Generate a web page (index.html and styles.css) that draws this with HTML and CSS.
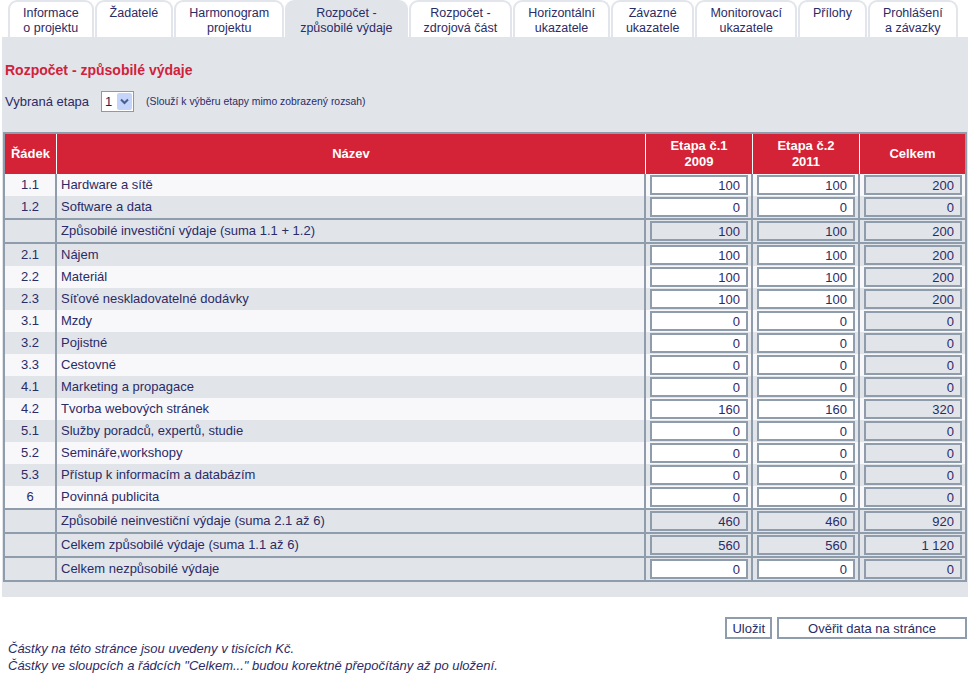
FILE: index.html
```html
<!DOCTYPE html>
<html lang="cs">
<head>
<meta charset="utf-8">
<title>Rozpočet - způsobilé výdaje</title>
<link rel="stylesheet" href="styles.css">
</head>
<body>
<div class="page">
  <nav class="tabs">
    <a class="tab">Informace<br>o projektu</a>
    <a class="tab">Žadatelé</a>
    <a class="tab">Harmonogram<br>projektu</a>
    <a class="tab active">Rozpočet -<br>způsobilé výdaje</a>
    <a class="tab">Rozpočet -<br>zdrojová část</a>
    <a class="tab">Horizontální<br>ukazatele</a>
    <a class="tab">Závazné<br>ukazatele</a>
    <a class="tab">Monitorovací<br>ukazatele</a>
    <a class="tab">Přílohy</a>
    <a class="tab">Prohlášení<br>a závazky</a>
  </nav>

  <section class="panel">
    <h1 class="title">Rozpočet - způsobilé výdaje</h1>
    <div class="etapa">
      <span class="etapa-label">Vybraná etapa</span>
      <div class="select">
        <span class="select-value">1</span>
        <span class="select-btn">
          <svg width="9" height="7" viewBox="0 0 9 7"><path d="M1 1.5 L4.5 5 L8 1.5" fill="none" stroke="#4a5f8c" stroke-width="2"/></svg>
        </span>
      </div>
      <span class="hint">(Slouží k výběru etapy mimo zobrazený rozsah)</span>
    </div>

    <table class="budget">
      <colgroup>
        <col class="c-num"><col class="c-name"><col class="c-val"><col class="c-val"><col class="c-total">
      </colgroup>
      <thead>
        <tr><th>Řádek</th><th>Název</th><th>Etapa č.1<br>2009</th><th>Etapa č.2<br>2011</th><th class="last">Celkem</th></tr>
      </thead>
      <tbody>
        <tr class="light"><td class="num">1.1</td><td class="name">Hardware a sítě</td><td class="val"><input value="100"></td><td class="val"><input value="100"></td><td class="val last"><input class="ro" value="200" readonly></td></tr>
        <tr class="gray"><td class="num">1.2</td><td class="name">Software a data</td><td class="val"><input value="0"></td><td class="val"><input value="0"></td><td class="val last"><input class="ro" value="0" readonly></td></tr>
        <tr class="gray sep"><td class="num"></td><td class="name">Způsobilé investiční výdaje (suma 1.1 + 1.2)</td><td class="val"><input class="ro" value="100" readonly></td><td class="val"><input class="ro" value="100" readonly></td><td class="val last"><input class="ro" value="200" readonly></td></tr>
        <tr class="gray sep"><td class="num">2.1</td><td class="name">Nájem</td><td class="val"><input value="100"></td><td class="val"><input value="100"></td><td class="val last"><input class="ro" value="200" readonly></td></tr>
        <tr class="light"><td class="num">2.2</td><td class="name">Materiál</td><td class="val"><input value="100"></td><td class="val"><input value="100"></td><td class="val last"><input class="ro" value="200" readonly></td></tr>
        <tr class="gray"><td class="num">2.3</td><td class="name">Síťové neskladovatelné dodávky</td><td class="val"><input value="100"></td><td class="val"><input value="100"></td><td class="val last"><input class="ro" value="200" readonly></td></tr>
        <tr class="light"><td class="num">3.1</td><td class="name">Mzdy</td><td class="val"><input value="0"></td><td class="val"><input value="0"></td><td class="val last"><input class="ro" value="0" readonly></td></tr>
        <tr class="gray"><td class="num">3.2</td><td class="name">Pojistné</td><td class="val"><input value="0"></td><td class="val"><input value="0"></td><td class="val last"><input class="ro" value="0" readonly></td></tr>
        <tr class="light"><td class="num">3.3</td><td class="name">Cestovné</td><td class="val"><input value="0"></td><td class="val"><input value="0"></td><td class="val last"><input class="ro" value="0" readonly></td></tr>
        <tr class="gray"><td class="num">4.1</td><td class="name">Marketing a propagace</td><td class="val"><input value="0"></td><td class="val"><input value="0"></td><td class="val last"><input class="ro" value="0" readonly></td></tr>
        <tr class="light"><td class="num">4.2</td><td class="name">Tvorba webových stránek</td><td class="val"><input value="160"></td><td class="val"><input value="160"></td><td class="val last"><input class="ro" value="320" readonly></td></tr>
        <tr class="gray"><td class="num">5.1</td><td class="name">Služby poradců, expertů, studie</td><td class="val"><input value="0"></td><td class="val"><input value="0"></td><td class="val last"><input class="ro" value="0" readonly></td></tr>
        <tr class="light"><td class="num">5.2</td><td class="name">Semináře,workshopy</td><td class="val"><input value="0"></td><td class="val"><input value="0"></td><td class="val last"><input class="ro" value="0" readonly></td></tr>
        <tr class="gray"><td class="num">5.3</td><td class="name">Přístup k informacím a databázím</td><td class="val"><input value="0"></td><td class="val"><input value="0"></td><td class="val last"><input class="ro" value="0" readonly></td></tr>
        <tr class="light"><td class="num">6</td><td class="name">Povinná publicita</td><td class="val"><input value="0"></td><td class="val"><input value="0"></td><td class="val last"><input class="ro" value="0" readonly></td></tr>
        <tr class="gray sep"><td class="num"></td><td class="name">Způsobilé neinvestiční výdaje (suma 2.1 až 6)</td><td class="val"><input class="ro" value="460" readonly></td><td class="val"><input class="ro" value="460" readonly></td><td class="val last"><input class="ro" value="920" readonly></td></tr>
        <tr class="gray sep"><td class="num"></td><td class="name">Celkem způsobilé výdaje (suma 1.1 až 6)</td><td class="val"><input class="ro" value="560" readonly></td><td class="val"><input class="ro" value="560" readonly></td><td class="val last"><input class="ro" value="1 120" readonly></td></tr>
        <tr class="gray sep"><td class="num"></td><td class="name">Celkem nezpůsobilé výdaje</td><td class="val"><input value="0"></td><td class="val"><input value="0"></td><td class="val last"><input class="ro" value="0" readonly></td></tr>
      </tbody>
    </table>
  </section>

  <div class="actions">
    <button class="btn">Uložit</button>
    <button class="btn btn-wide">Ověřit data na stránce</button>
  </div>

  <div class="notes">
    <p>Částky na této stránce jsou uvedeny v tisících Kč.</p>
    <p>Částky ve sloupcích a řádcích "Celkem..." budou korektně přepočítány až po uložení.</p>
  </div>
</div>
</body>
</html>
```

FILE: styles.css
```css
html, body {
  margin: 0;
  padding: 0;
  background: #ffffff;
}

body {
  font-family: "Liberation Sans", Arial, sans-serif;
  font-size: 13px;
  color: #2b2b66;
}

.page {
  width: 966px;
  margin-left: 2px;
}

/* ---------- tabs ---------- */
.tabs {
  display: flex;
  align-items: flex-end;
  padding-left: 6px;
  height: 37px;
}

.tab {
  box-sizing: border-box;
  height: 37px;
  padding: 4px 13px 0;
  margin-right: 1px;
  border: 2px solid #e2e5eb;
  border-bottom: none;
  border-radius: 9px 9px 0 0;
  background: #ffffff;
  font-size: 12.5px;
  line-height: 15px;
  text-align: center;
  color: #2b2b66;
  white-space: nowrap;
}

.tab.active {
  background: #e1e5ea;
  border-color: #e1e5ea;
}

/* ---------- panel ---------- */
.panel {
  background: #e1e5ea;
  padding: 25px 1px 15px;
}

.title {
  margin: 0 0 13px 2px;
  font-size: 14px;
  line-height: 16px;
  font-weight: bold;
  color: #d1213b;
}

.etapa {
  display: flex;
  align-items: center;
  height: 21px;
  margin: 0 0 20px 2px;
}

.etapa-label {
  font-size: 13px;
}

.select {
  display: flex;
  box-sizing: border-box;
  width: 33px;
  height: 21px;
  margin-left: 12px;
  border: 1px solid #7f9db9;
  background: #ffffff;
}

.select-value {
  flex: 1;
  padding-left: 3px;
  font-size: 13px;
  line-height: 19px;
  color: #1f1f55;
}

.select-btn {
  display: flex;
  align-items: center;
  justify-content: center;
  width: 15px;
  margin: 1px;
  background: #c5d4fb;
  border-radius: 2px;
}

.hint {
  margin-left: 12px;
  font-size: 10.4px;
}

/* ---------- table ---------- */
.budget {
  table-layout: fixed;
  width: 964px;
  border-collapse: separate;
  border-spacing: 0;
  border: 2px solid #8e9cab;
}

.c-num { width: 52px; }
.c-val { width: 107px; }
.c-total { width: 105px; }

.budget th {
  height: 40px;
  padding: 0;
  background: #d42236;
  color: #ffffff;
  font-size: 13px;
  font-weight: bold;
  line-height: 16px;
  text-align: center;
  vertical-align: middle;
  border-right: 1px solid #ffffff;
}

.budget th.last {
  border-right: none;
}

.budget td {
  padding: 1px 3px 1px 4px;
  height: 20px;
  line-height: 20px;
  font-size: 13px;
  border-right: 2px solid #8e9cab;
  white-space: nowrap;
}

.budget td.last {
  border-right: none;
}

.budget tr.sep td {
  border-top: 2px solid #8e9cab;
}

.budget tr.light td { background: #f8f7f9; }
.budget tr.gray td { background: #e1e5ea; }

.budget td.num {
  text-align: center;
  padding-left: 0;
  padding-right: 0;
}

.budget input {
  display: block;
  box-sizing: border-box;
  width: 100%;
  height: 20px;
  margin: 0;
  padding: 0 6px 0 2px;
  border: 2px solid #8e9cab;
  background: #ffffff;
  font-family: "Liberation Sans", Arial, sans-serif;
  font-size: 13px;
  color: #2b2b66;
  text-align: right;
  outline: none;
}

.budget input.ro {
  background: #e1e5ea;
}

/* ---------- actions ---------- */
.actions {
  display: flex;
  justify-content: flex-end;
  gap: 5px;
  margin: 20px 1px 1px 0;
}

.btn {
  box-sizing: border-box;
  height: 22px;
  padding: 0 5px;
  border: 2px solid #8e9cab;
  background: #ffffff;
  font-family: "Liberation Sans", Arial, sans-serif;
  font-size: 13px;
  font-weight: normal;
  color: #2b2b66;
}

.btn-wide {
  width: 190px;
}

/* ---------- notes ---------- */
.notes {
  padding-left: 6px;
}

.notes p {
  margin: 0;
  font-size: 13px;
  line-height: 17px;
  font-style: italic;
}
```
